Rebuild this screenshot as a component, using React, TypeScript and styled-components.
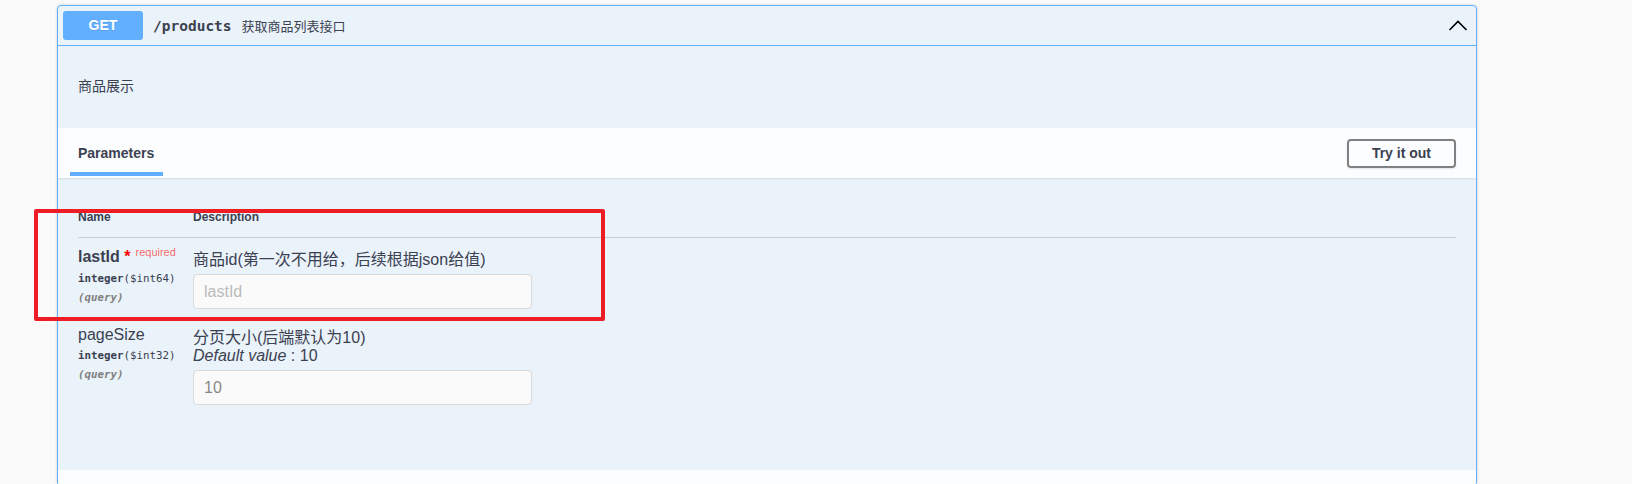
import React from "react";
import styled, { createGlobalStyle } from "styled-components";

const SANS = `"Liberation Sans", "Noto Sans CJK SC", sans-serif`;
const MONO = `"DejaVu Sans Mono", "Liberation Mono", monospace`;
const INK = "#3b4151";
const BLUE = "#61affe";

const GlobalStyle = createGlobalStyle`
  html, body {
    margin: 0;
    padding: 0;
    background: #fafafa;
    font-family: ${SANS};
    color: ${INK};
  }
  * { box-sizing: border-box; }
`;

const Page = styled.div`
  position: relative;
  min-height: 484px;
  padding: 5px 0 0 57px;
`;

const Card = styled.section`
  width: 1420px;
  border: 1px solid ${BLUE};
  border-radius: 4px;
  background: rgba(97, 175, 254, 0.1);
  box-shadow: 0 0 3px rgba(0, 0, 0, 0.19);
  overflow: hidden;
`;

const Summary = styled.div`
  display: flex;
  align-items: center;
  padding: 5px;
  border-bottom: 1px solid ${BLUE};
`;

const Method = styled.span`
  flex: none;
  min-width: 80px;
  height: 29px;
  line-height: 29px;
  text-align: center;
  background: ${BLUE};
  border-radius: 3px;
  color: #fff;
  font-family: ${SANS};
  font-size: 14px;
  font-weight: 700;
  text-shadow: 0 1px 0 rgba(0, 0, 0, 0.1);
`;

const Path = styled.span`
  padding: 0 10px;
  font-family: ${MONO};
  font-size: 14.5px;
  font-weight: 700;
  color: ${INK};
`;

const SummaryText = styled.span`
  flex: 1;
  font-size: 13px;
  color: ${INK};
`;

const Chevron = styled.button`
  display: flex;
  background: none;
  border: none;
  padding: 0;
  margin-right: 3px;
  cursor: pointer;
`;

const Description = styled.div`
  padding: 31px 20px 33px;
  font-size: 14px;
  line-height: 18px;
`;

const SectionHeader = styled.div`
  display: flex;
  align-items: center;
  justify-content: space-between;
  height: 50px;
  padding: 0 20px;
  background: rgba(255, 255, 255, 0.8);
  box-shadow: 0 1px 2px rgba(0, 0, 0, 0.1);
  position: relative;
`;

const NextSection = styled.div`
  height: 15px;
  background: rgba(255, 255, 255, 0.8);
`;

const TabTitle = styled.h4<{ $active?: boolean }>`
  position: relative;
  margin: 0 0 0 -8px;
  padding: 0 8px;
  font-size: 14px;
  line-height: 16px;
  font-weight: 700;
  color: ${INK};
  &::after {
    content: "";
    display: ${(p) => (p.$active ? "block" : "none")};
    position: absolute;
    left: 0;
    right: -1px;
    top: calc(100% + 11px);
    height: 4px;
    background: ${BLUE};
  }
`;

const TryButton = styled.button`
  border: 2px solid gray;
  border-radius: 4px;
  background: transparent;
  padding: 5px 23px;
  font-family: ${SANS};
  font-size: 14px;
  line-height: 15px;
  font-weight: 700;
  color: ${INK};
  box-shadow: 0 1px 2px rgba(0, 0, 0, 0.1);
`;

const TableWrap = styled.div`
  padding: 20px 20px 60px;
`;

const HeadRow = styled.div`
  display: flex;
  padding: 12px 0;
  border-bottom: 1px solid rgba(59, 65, 81, 0.2);
  font-size: 12px;
  line-height: 15px;
  font-weight: 700;
`;

const NameHead = styled.div`
  width: 115px;
  flex: none;
`;

const ParamRow = styled.div`
  display: flex;
  align-items: flex-start;
  padding-top: 10px;
`;

const NameCell = styled.div`
  width: 115px;
  flex: none;
  padding-bottom: 11px;
`;

const ParamName = styled.div<{ $required?: boolean }>`
  font-size: 16px;
  line-height: 18px;
  font-weight: ${(p) => (p.$required ? 700 : 400)};
  white-space: nowrap;
`;

const Star = styled.span`
  color: red;
`;

const RequiredTag = styled.span`
  position: relative;
  top: -6px;
  padding-left: 5px;
  font-size: 11px;
  font-weight: 400;
  color: rgba(255, 0, 0, 0.6);
`;

const ParamType = styled.div`
  padding: 5px 0;
  font-family: ${MONO};
  font-size: 10.8px;
  line-height: 14px;
  font-weight: 700;
  white-space: nowrap;
`;

const PropFormat = styled.span`
  font-weight: 400;
`;

const ParamIn = styled.div`
  font-family: ${MONO};
  font-size: 10.8px;
  line-height: 14px;
  font-style: italic;
  font-weight: 600;
  color: gray;
`;

const DescCell = styled.div`
  flex: 1;
  padding-top: 3px;
`;

const DescText = styled.div`
  font-size: 16px;
  line-height: 18px;
`;

const DefaultLabel = styled.i`
  font-style: italic;
`;

const TextInput = styled.input`
  display: block;
  width: 339px;
  height: 35px;
  margin: 5px 0;
  padding: 8px 10px;
  border: 1px solid #d9d9d9;
  border-radius: 4px;
  background: #fafafa;
  font-family: ${SANS};
  font-size: 16px;
  color: #888;
  &::placeholder {
    color: #bbb;
  }
`;

const Annotation = styled.div`
  position: absolute;
  left: 34px;
  top: 209px;
  width: 571px;
  height: 112px;
  border: 4px solid #ee1c25;
  border-radius: 2px;
  pointer-events: none;
`;

type Param = {
  name: string;
  required?: boolean;
  type: string;
  format: string;
  location: string;
  description: string;
  defaultValue?: string;
  placeholder?: string;
  value?: string;
};

const params: Param[] = [
  {
    name: "lastId",
    required: true,
    type: "integer",
    format: "($int64)",
    location: "(query)",
    description: "商品id(第一次不用给，后续根据json给值)",
    placeholder: "lastId",
  },
  {
    name: "pageSize",
    type: "integer",
    format: "($int32)",
    location: "(query)",
    description: "分页大小(后端默认为10)",
    defaultValue: "10",
    value: "10",
  },
];

export default function App() {
  return (
    <>
      <GlobalStyle />
      <Page>
        <Card>
          <Summary>
            <Method>GET</Method>
            <Path>/products</Path>
            <SummaryText>获取商品列表接口</SummaryText>
            <Chevron aria-label="collapse">
              <svg width="20" height="20" viewBox="0 0 20 20">
                <polyline
                  points="1.5,14 10,5.5 18.5,14"
                  fill="none"
                  stroke="#000"
                  strokeWidth="1.6"
                />
              </svg>
            </Chevron>
          </Summary>
          <Description>商品展示</Description>
          <SectionHeader>
            <TabTitle $active>Parameters</TabTitle>
            <TryButton>Try it out</TryButton>
          </SectionHeader>
          <TableWrap>
            <HeadRow>
              <NameHead>Name</NameHead>
              <div>Description</div>
            </HeadRow>
            {params.map((p) => (
              <ParamRow key={p.name}>
                <NameCell>
                  <ParamName $required={p.required}>
                    {p.name}
                    {p.required && (
                      <>
                        {" "}
                        <Star>*</Star>
                        <RequiredTag>required</RequiredTag>
                      </>
                    )}
                  </ParamName>
                  <ParamType>
                    {p.type}
                    <PropFormat>{p.format}</PropFormat>
                  </ParamType>
                  <ParamIn>{p.location}</ParamIn>
                </NameCell>
                <DescCell>
                  <DescText>{p.description}</DescText>
                  {p.defaultValue && (
                    <DescText>
                      <DefaultLabel>Default value</DefaultLabel> : {p.defaultValue}
                    </DescText>
                  )}
                  <TextInput
                    type="text"
                    disabled
                    placeholder={p.placeholder}
                    defaultValue={p.value}
                  />
                </DescCell>
              </ParamRow>
            ))}
          </TableWrap>
          <NextSection />
        </Card>
        <Annotation />
      </Page>
    </>
  );
}
